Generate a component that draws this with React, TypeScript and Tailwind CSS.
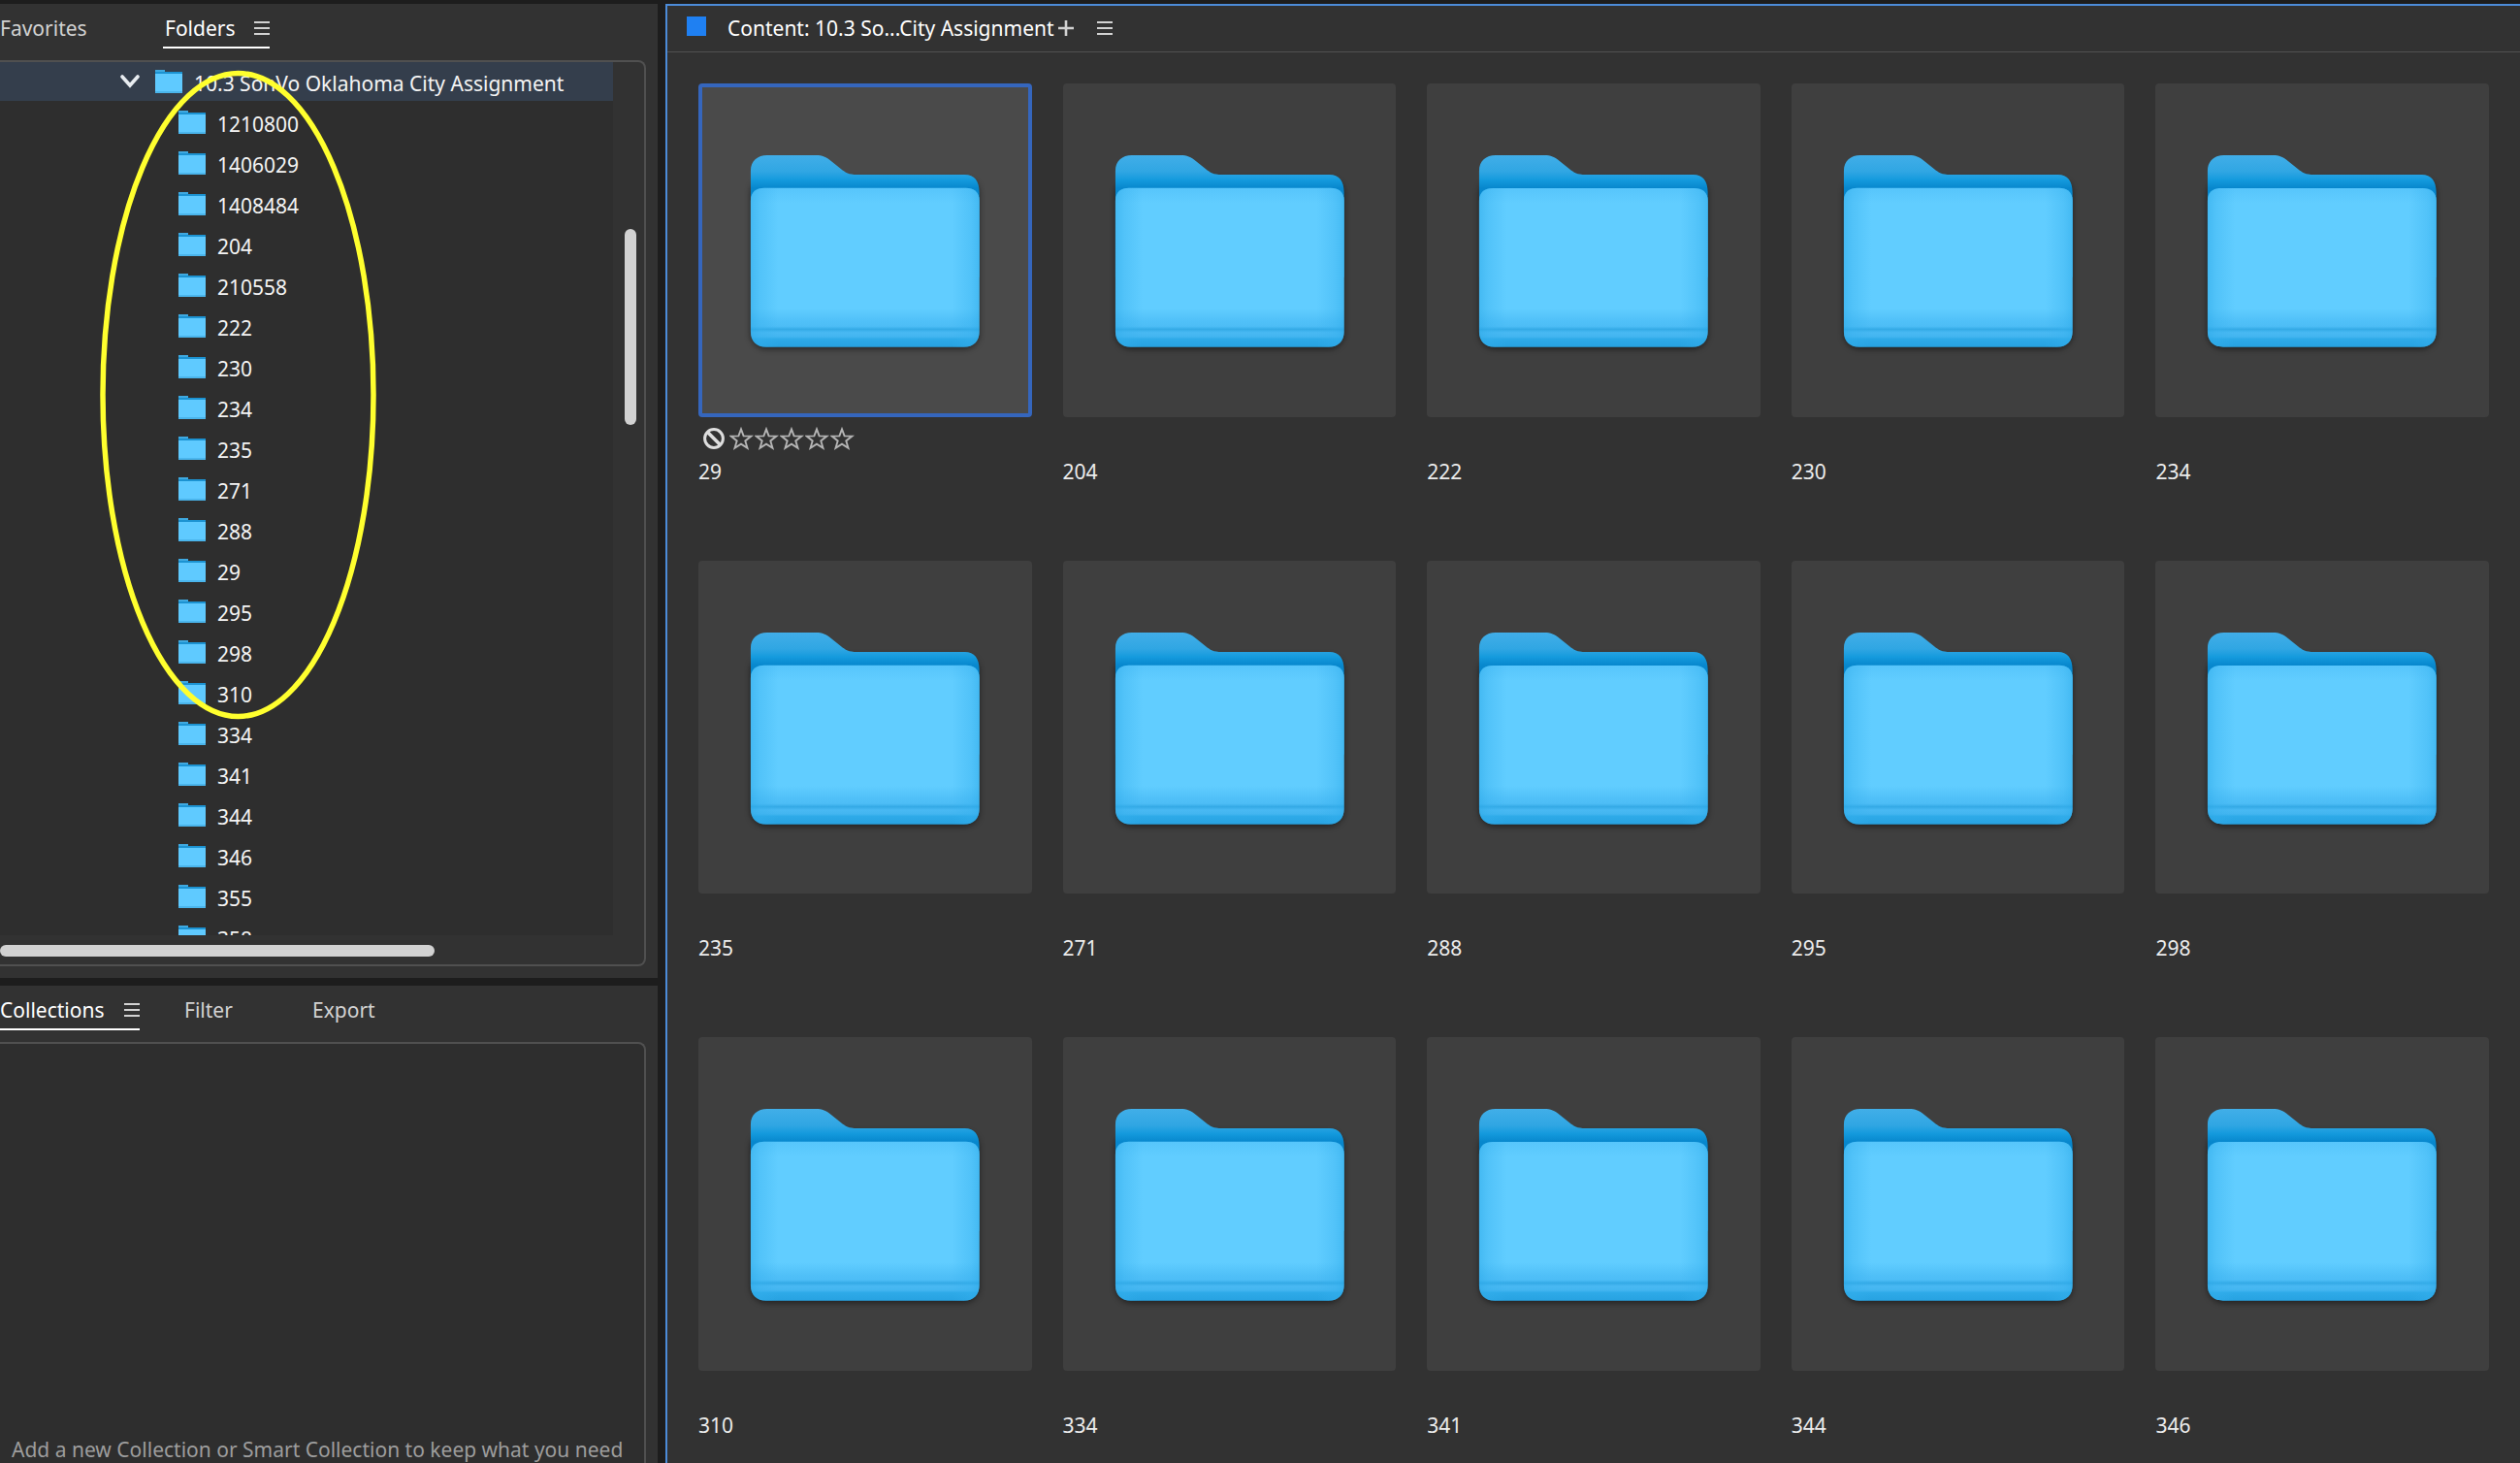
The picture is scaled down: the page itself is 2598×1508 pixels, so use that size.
import { useState } from 'react';

const treeFolders = [
    '1210800', '1406029', '1408484', '204', '210558', '222', '230', '234', '235', '271', '288',
    '29', '295', '298', '310', '334', '341', '344', '346', '355', '358',
];

const contentFolders = [
    '29', '204', '222', '230', '234',
    '235', '271', '288', '295', '298',
    '310', '334', '341', '344', '346',
];

const MenuIcon = () => (
    <svg width="16" height="14" viewBox="0 0 16 14" className="shrink-0" fill="currentColor" aria-hidden="true">
        <rect width="16" height="2" />
        <rect y="6" width="16" height="2" />
        <rect y="12" width="16" height="2" />
    </svg>
);

const SmallFolder = () => (
    <svg width="28" height="24" viewBox="0 0 28 24" className="shrink-0" aria-hidden="true">
        <rect width="10" height="3" fill="#3fa9e0" />
        <rect y="2" width="28" height="22" fill="#1c93d2" />
        <rect y="4" width="28" height="20" fill="#5fcaff" />
        <rect y="22" width="28" height="2" fill="#4ab5ec" />
    </svg>
);

// Shared gradients and shapes, referenced by every thumbnail
const FolderDefs = () => (
    <svg width="0" height="0" className="absolute" aria-hidden="true">
        <defs>
            <linearGradient id="back" x1="0" y1="74" x2="0" y2="108" gradientUnits="userSpaceOnUse">
                <stop offset="0" stopColor="#41aee8" />
                <stop offset="0.5" stopColor="#30a6e3" />
                <stop offset="0.75" stopColor="#149add" />
                <stop offset="1" stopColor="#0787cd" />
            </linearGradient>
            <linearGradient id="front" x1="0" y1="107" x2="0" y2="272" gradientUnits="userSpaceOnUse">
                <stop offset="0" stopColor="#56c5fb" />
                <stop offset="0.1" stopColor="#61cdff" />
                <stop offset="0.76" stopColor="#61cdff" />
                <stop offset="0.84" stopColor="#50c0f8" />
                <stop offset="0.87" stopColor="#4dbdf6" />
                <stop offset="0.89" stopColor="#34aae6" />
                <stop offset="0.91" stopColor="#49b9f3" />
                <stop offset="0.935" stopColor="#43b5f0" />
                <stop offset="0.95" stopColor="#2eaae8" />
                <stop offset="1" stopColor="#27a2e1" />
            </linearGradient>
            <linearGradient id="sides">
                <stop offset="0" stopColor="#2ba9e8" stopOpacity="0.55" />
                <stop offset="0.04" stopColor="#35b0ee" stopOpacity="0.35" />
                <stop offset="0.12" stopColor="#35b0ee" stopOpacity="0" />
                <stop offset="0.88" stopColor="#35b0ee" stopOpacity="0" />
                <stop offset="0.96" stopColor="#35b0ee" stopOpacity="0.35" />
                <stop offset="1" stopColor="#2ba9e8" stopOpacity="0.55" />
            </linearGradient>
            <filter id="soft" x="-10%" y="-10%" width="120%" height="120%">
                <feGaussianBlur stdDeviation="3" />
            </filter>
        </defs>
    </svg>
);

const LargeFolder = () => (
    <svg viewBox="4 4 336 336" className="w-full" aria-hidden="true">
        <rect x="54" y="98" width="236" height="176" rx="16" fill="#000" opacity="0.5" filter="url(#soft)" />
        <path
            d="M54 90C54 80 61 74 71 74H121C128 74 132 76 137 80L147 88C152 92 155 94 164 94H275C285 94 290 101 290 112V200H54Z"
            fill="url(#back)"
        />
        <path
            d="M54 121C54 112 60 108 68 108H276C284 108 290 112 290 121V256C290 266 284 272 274 272H70C60 272 54 266 54 256Z"
            fill="url(#front)"
        />
        <path
            d="M54 121C54 112 60 108 68 108H276C284 108 290 112 290 121V256C290 266 284 272 274 272H70C60 272 54 266 54 256Z"
            fill="url(#sides)"
        />
    </svg>
);

const Rating = () => (
    <div className="flex items-center pl-1 text-[#b5b5b5]">
        <button type="button" aria-label="No rating" className="mr-1 text-[#dedede]">
            <svg width="24" height="24" viewBox="0 0 24 24" fill="none" stroke="currentColor" strokeWidth="3">
                <circle cx="12" cy="12" r="9.4" />
                <path d="M5.5 5.5L18.5 18.5" strokeWidth="3.6" />
            </svg>
        </button>
        {[1, 2, 3, 4, 5].map((star) => (
            <button key={star} type="button" aria-label={`${star} stars`}>
                <svg width="26" height="24" viewBox="0 0 26 24" fill="none" stroke="currentColor" strokeWidth="1.9">
                    <path d="M12 2.4L14.6 9.4L22.4 9.6L16.3 14.4L18.5 21.8L12 17.6L5.5 21.8L7.7 14.4L1.6 9.6L9.4 9.4Z" />
                </svg>
            </button>
        ))}
    </div>
);

const FoldersPanel = () => (
    <section className="flex min-h-0 flex-1 flex-col bg-[#323232] pb-3">
        <div className="flex h-[58px] shrink-0 items-start text-[#d2d2d2]">
            <button type="button" className="h-[46px] w-[168px] pb-0.5 pt-1.5 text-left">Favorites</button>
            <button type="button" className="flex h-[46px] w-[110px] items-center justify-between border-b-2 border-white pl-0.5 pt-1.5">
                <span className="text-white">Folders</span>
                <MenuIcon />
            </button>
        </div>
        <div className="mr-3 flex min-h-0 flex-1 flex-col rounded-r-lg border-y-2 border-r-2 border-[#505050]">
            <div className="flex min-h-0 flex-1">
                <ul className="flex min-w-0 flex-1 flex-col gap-0.5 overflow-hidden bg-[#2e2e2e] text-[#f4f4f4]">
                    <li className="shrink-0">
                        <button type="button" className="flex h-10 w-full items-center bg-[#343e4c] pl-[124px]">
                            <svg width="20" height="14" viewBox="0 0 20 14" fill="none" stroke="#e8ecf0" strokeWidth="3.6" strokeLinecap="round" className="mr-4" aria-hidden="true">
                                <path d="M2 2L10 11L18 2" />
                            </svg>
                            <SmallFolder />
                            <span className="pl-3 pt-1">10.3 SonVo Oklahoma City Assignment</span>
                        </button>
                    </li>
                    {treeFolders.map((name) => (
                        <li key={name} className="shrink-0">
                            <button type="button" className="flex h-10 w-full items-center pl-[184px]">
                                <SmallFolder />
                                <span className="pl-3 pt-1">{name}</span>
                            </button>
                        </li>
                    ))}
                </ul>
                <div className="w-8 shrink-0 pl-3 pt-[172px]">
                    <div className="h-[202px] w-3 rounded-full bg-[#d2d2d2]" />
                </div>
            </div>
            <div className="h-[30px] shrink-0 pt-[10px]">
                <div className="h-3 w-[448px] rounded-full bg-[#d2d2d2]" />
            </div>
        </div>
    </section>
);

const CollectionsPanel = () => (
    <section className="flex h-[492px] shrink-0 flex-col bg-[#323232]">
        <div className="flex h-[58px] shrink-0 items-start text-[#d2d2d2]">
            <button type="button" className="flex h-[46px] w-36 items-center justify-between border-b-2 border-white pt-1.5">
                <span className="text-white">Collections</span>
                <MenuIcon />
            </button>
            <button type="button" className="ml-[46px] h-[46px] w-[132px] pb-0.5 pt-1.5 text-left">Filter</button>
            <button type="button" className="h-[46px] pb-0.5 pt-1.5">Export</button>
        </div>
        <div className="mr-3 flex flex-1 items-end rounded-tr-lg border-r-2 border-t-2 border-[#505050] bg-[#2e2e2e] pl-3">
            <p className="whitespace-nowrap text-[#9d9d9d]">Add a new Collection or Smart Collection to keep what you need</p>
        </div>
    </section>
);

const ContentPanel = () => {
    const [selected, setSelected] = useState('29');

    return (
        <main className="min-w-0 flex-1 overflow-hidden border-l-2 border-t-2 border-[#4c8bd8] bg-[#323232]">
            <header className="flex h-12 items-center border-b border-[#505050] pb-0.5 pl-5 text-[#d2d2d2]">
                <span className="mb-1 size-5 bg-[#1f80f2]" />
                <h1 className="ml-[22px] text-white">Content: 10.3 So...City Assignment</h1>
                <button type="button" aria-label="Add tab" className="ml-1">
                    <svg width="16" height="16" viewBox="0 0 16 16" stroke="currentColor" strokeWidth="2.6" aria-hidden="true">
                        <path d="M8 0V16M0 8H16" />
                    </svg>
                </button>
                <button type="button" aria-label="Panel menu" className="ml-6">
                    <MenuIcon />
                </button>
            </header>
            <ul className="grid grid-cols-5 gap-x-8 gap-y-[62px] px-8 pt-8">
                {contentFolders.map((name) => (
                    <li key={name}>
                        <button
                            type="button"
                            aria-label={`Folder ${name}`}
                            onClick={() => setSelected(name)}
                            className={`block w-full rounded border-4 ${name === selected ? 'border-[#3566bd] bg-[#4a4a4a]' : 'border-[#3f3f3f] bg-[#3f3f3f]'}`}
                        >
                            <LargeFolder />
                        </button>
                        <div className="h-[42px] pt-[10px]">{name === selected && <Rating />}</div>
                        <p className="h-11 text-[#ececec]">{name}</p>
                    </li>
                ))}
            </ul>
        </main>
    );
};

const App = () => (
    <div className="relative flex h-screen gap-2 overflow-hidden bg-[#1d1d1d] pt-1 font-['Noto_Sans','Open_Sans',sans-serif] text-[21px] leading-7">
        <FolderDefs />
        <aside className="flex w-[678px] shrink-0 flex-col gap-2">
            <FoldersPanel />
            <CollectionsPanel />
        </aside>
        <ContentPanel />

        {/* Highlighter ring drawn over the tree */}
        <svg width="290" height="672" viewBox="0 0 290 672" className="pointer-events-none absolute left-[102px] top-[71px]" fill="none" aria-hidden="true">
            <ellipse cx="143.5" cy="336" rx="139.5" ry="331.5" stroke="#ffff2e" strokeWidth="5.5" />
        </svg>
    </div>
);

export default App;
